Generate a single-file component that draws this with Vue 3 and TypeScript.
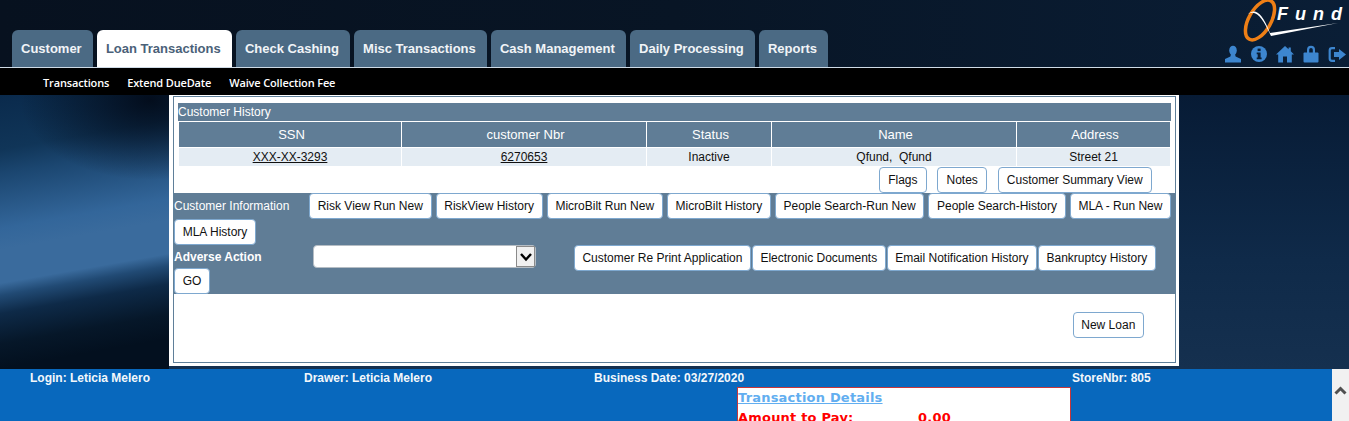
<script setup lang="ts">
const tabs = ['Customer', 'Loan Transactions', 'Check Cashing', 'Misc Transactions', 'Cash Management', 'Daily Processing', 'Reports']
const subs = ['Transactions', 'Extend DueDate', 'Waive Collection Fee']
const infoButtons = ['Risk View Run New', 'RiskView History', 'MicroBilt Run New', 'MicroBilt History', 'People Search-Run New', 'People Search-History', 'MLA - Run New']
const adverseButtons = ['Customer Re Print Application', 'Electronic Documents', 'Email Notification History', 'Bankruptcy History']
</script>

<template>
  <div class="page">
    <header class="top">
      <nav class="tabs">
        <a v-for="t in tabs" :key="t" class="tab" :class="{ active: t === 'Loan Transactions' }">{{ t }}</a>
      </nav>
      <div class="brand">
        <div class="logo">
          <svg class="logo-art" width="107" height="44" viewBox="0 0 107 44">
            <ellipse cx="18" cy="20" rx="11" ry="22" transform="rotate(30 18 20)" fill="none" stroke="#ee7f16" stroke-width="3.5" />
            <path d="M6 14 C13 8 20 12 28 33 L96 23 L29 36 C21 19 15 9 6 14Z" fill="#fff" />
          </svg>
          <span class="fund">Fund</span>
        </div>
        <div class="icons">
          <svg width="18" height="18" viewBox="0 0 18 18"><ellipse cx="9" cy="5.5" rx="3.8" ry="4.8" fill="#3d86cf"/><path d="M7 9h4l.6 2.6L17 14v3.4H1V14l5.4-2.4z" fill="#3d86cf"/></svg>
          <svg width="18" height="18" viewBox="0 0 18 18"><circle cx="9" cy="9" r="8" fill="#3d86cf"/><rect x="7.6" y="3.6" width="3" height="2.5" fill="#0a1c33"/><path d="M6.7 7.4h3.9v5h1v1.8H6.7v-1.8h1V9.2h-1z" fill="#0a1c33"/></svg>
          <svg width="18" height="18" viewBox="0 0 18 18"><path d="M9 1 L12.6 4.2 V2.4 H14.8 V6.2 L18 9.4 L15.8 9.4 L15.8 17.4 L11 17.4 L11 11.6 L7 11.6 L7 17.4 L2.2 17.4 L2.2 9.4 L0 9.4Z" fill="#3d86cf"/></svg>
          <svg width="18" height="18" viewBox="0 0 18 18"><path d="M5 8V4.8a4 4 0 0 1 8 0V8h-2.2V4.8a1.8 1.8 0 0 0-3.6 0V8z" fill="#3d86cf"/><rect x="1.5" y="7.5" width="15" height="10" rx="1" fill="#3d86cf"/></svg>
          <svg width="18" height="18" viewBox="0 0 18 18"><path d="M7 2H4a3.4 3.4 0 0 0-3.4 3.4v8.2A3.4 3.4 0 0 0 4 17h3v-2.2H4.2a1.4 1.4 0 0 1-1.4-1.4V5.6a1.4 1.4 0 0 1 1.4-1.4H7z" fill="#3d86cf"/><path d="M11 4 L18 9.5 L11 15 V12 H6 V7 H11Z" fill="#3d86cf"/></svg>
        </div>
      </div>
    </header>

    <nav class="subnav">
      <a v-for="s in subs" :key="s">{{ s }}</a>
    </nav>

    <main class="stage">
      <section class="card">
        <div class="frame">
          <div class="title">Customer History</div>
          <div class="grid head">
            <div>SSN</div><div>customer Nbr</div><div>Status</div><div>Name</div><div>Address</div>
          </div>
          <div class="grid row">
            <div><u>XXX-XX-3293</u></div><div><u>6270653</u></div><div>Inactive</div><div>Qfund,&nbsp; Qfund</div><div>Street 21</div>
          </div>
          <div class="flags">
            <button class="btn">Flags</button>
            <button class="btn">Notes</button>
            <button class="btn">Customer Summary View</button>
          </div>
          <div class="panel">
            <div class="line info-line">
              <span class="label">Customer Information</span>
              <button v-for="b in infoButtons" :key="b" class="btn">{{ b }}</button>
            </div>
            <div class="line"><button class="btn">MLA History</button></div>
            <div class="line adverse-line">
              <strong class="label adverse">Adverse Action</strong>
              <div class="select"><span class="arrow"><svg width="14" height="10" viewBox="0 0 14 10"><path d="M2 2 L7 7.5 L12 2" fill="none" stroke="#000" stroke-width="2.4"/></svg></span></div>
              <div class="adverse-buttons">
                <button v-for="b in adverseButtons" :key="b" class="btn">{{ b }}</button>
              </div>
            </div>
            <div class="line go-line"><button class="btn">GO</button></div>
          </div>
          <div class="actions"><button class="btn">New Loan</button></div>
        </div>
      </section>
    </main>

    <footer class="foot">
      <div class="foot-main">
        <div class="status">
          <span class="s1">Login: Leticia Melero</span>
          <span class="s2">Drawer: Leticia Melero</span>
          <span class="s3">Business Date: 03/27/2020</span>
          <span class="s4">StoreNbr: 805</span>
        </div>
        <div class="details">
          <a class="details-title">Transaction Details</a>
          <div class="amount"><span>Amount to Pay:</span><span class="val">0.00</span></div>
        </div>
      </div>
      <div class="scroll">
        <svg width="17" height="17" viewBox="0 0 17 17"><path d="M3.5 11.5 L8.5 6.5 L13.5 11.5" fill="none" stroke="#505050" stroke-width="3"/></svg>
      </div>
    </footer>
  </div>
</template>

<style>
html, body { margin: 0; padding: 0; overflow: hidden; }
</style>

<style scoped>
.page {
  width: 1349px;
  height: 421px;
  overflow: hidden;
  font-family: "Liberation Sans", Arial, sans-serif;
  display: flex;
  flex-direction: column;
}
.top {
  flex: none;
  height: 67px;
  background: linear-gradient(90deg, #07111f 0%, #081525 50%, #0a1e36 100%);
  display: flex;
  justify-content: space-between;
  align-items: flex-end;
  border-bottom: 1px solid #cfdbe6;
}
.tabs { display: flex; gap: 4.2px; padding-left: 12px; }
.tab {
  height: 37px;
  line-height: 37px;
  padding: 0 11px 0 9px;
  box-sizing: border-box;
  border-radius: 6px 6px 0 0;
  background: #4b6a84;
  color: #f1f4f7;
  font-size: 13px;
  font-weight: 700;
}
.tab.active { background: #fff; color: #4a6178; }
.brand { position: relative; width: 120px; height: 67px; }
.logo { position: absolute; left: 13px; top: 0; width: 107px; height: 44px; }
.logo-art { position: absolute; left: 0; top: 0; }
.fund {
  position: absolute;
  left: 35px;
  top: 4px;
  color: #fff;
  font: italic 700 18px "Liberation Sans", sans-serif;
  letter-spacing: 7px;
}
.icons {
  position: absolute;
  right: 3px;
  bottom: 4px;
  display: flex;
  gap: 8px;
}
.subnav {
  flex: none;
  height: 27px;
  box-sizing: border-box;
  padding: 2px 0 0 43px;
  background: #000;
  display: flex;
  align-items: center;
  gap: 18px;
  color: #fff;
  font: 600 11px "Open Sans", sans-serif;
  letter-spacing: -0.15px;
}
.stage {
  flex: none;
  height: 274px;
  background:
    radial-gradient(ellipse 130px 80px at 150px 5px, rgba(2, 10, 24, .92), rgba(2, 10, 24, 0) 100%) no-repeat 0 0 / 169px 100%,
    linear-gradient(170deg,
      #0a2a4c 0%, #103558 18%, #1b4670 26%, #33669a 44%, #3a6b9d 51%, #3a6b9d 62%,
      #214a74 66%, #0e2a48 72%, #061729 82%, #03101f 90%) no-repeat 0 0 / 169px 100%,
    linear-gradient(180deg, #071b35 0%, #0f2a49 60%, #15304f 100%);
}
.card {
  margin-left: 169px;
  width: 1010px;
  height: 271px;
  box-sizing: border-box;
  background: #fff;
  padding: 1px 3px 3px 4px;
}
.frame {
  height: 267px;
  box-sizing: border-box;
  border: 1px solid #5f7f99;
  padding-top: 6px;
  display: flex;
  flex-direction: column;
}
.title {
  flex: none;
  margin: 0 4px;
  height: 18px;
  line-height: 18px;
  background: #607d96;
  color: #fff;
  font-size: 12px;
}
.grid {
  flex: none;
  display: grid;
  grid-template-columns: 222px 245px 125px 245px 154px;
  margin: 1px 5px 0;
  text-align: center;
  font-size: 12px;
}
.grid > div { border-left: 1px solid #fff; box-sizing: border-box; }
.grid > div:first-child { border-left: 0; }
.head { height: 25px; line-height: 25px; background: #607d96; color: #fff; font-size: 13px; }
.head > div { padding-left: 3px; }
.row { height: 18px; line-height: 18px; background: #e4ecf3; color: #111; }
.btn {
  flex: none;
  height: 26px;
  box-sizing: border-box;
  padding: 0 7.7px;
  background: #fff;
  border: 1px solid #7ea8cf;
  border-radius: 4px;
  color: #111;
  font: 12px "Liberation Sans", Arial, sans-serif;
  white-space: nowrap;
}
.flags {
  flex: none;
  height: 26px;
  margin-top: 1px;
  display: flex;
  gap: 10.6px;
  padding-left: 705px;
}
.flags .btn { padding: 0 8.2px; }
.panel { flex: none; background: #607d96; height: 101px; }
.line { display: flex; height: 26px; gap: 4px; }
.label { color: #fff; font-size: 12px; line-height: 26px; width: 131px; flex: none; }
.adverse { font-weight: 700; line-height: 24px; }
.adverse-line { gap: 0; height: 23px; }
.select {
  flex: none;
  width: 223px;
  height: 23px;
  margin-left: 8px;
  box-sizing: border-box;
  background: #fff;
  border: 1px solid #b5bdc4;
  border-radius: 4px;
  display: flex;
  justify-content: flex-end;
}
.arrow {
  width: 19px;
  box-sizing: border-box;
  background: #f0f0f0;
  border: 1px solid #8a8a8a;
  display: flex;
  align-items: center;
  justify-content: center;
}
.adverse-buttons { display: flex; gap: 1.2px; margin-left: 38px; }
.adverse-buttons .btn { padding: 0 7.4px; }
.actions { display: flex; justify-content: flex-end; padding: 18px 31px 0 0; }
.foot {
  flex: none;
  height: 52px;
  display: flex;
  background: #0868bd;
  color: #f3f7fb;
}
.foot-main { flex: 1; }
.status { height: 18px; display: flex; font-size: 12px; font-weight: 700; line-height: 18px; }
.status span { flex: none; }
.s1 { margin-left: 30px; width: 274px; }
.s2 { width: 290px; }
.s3 { width: 478px; }
.details {
  margin-left: 737px;
  width: 334px;
  height: 34px;
  overflow: hidden;
  box-sizing: border-box;
  background: #fff;
  border: 1px solid #c8373a;
  border-bottom: 0;
  font: 700 13px "DejaVu Sans", sans-serif;
  letter-spacing: 0.2px;
}
.details-title { display: block; color: #62aef0; text-decoration: underline; line-height: 19px; }
.amount { color: #f00; display: flex; line-height: 19px; margin-top: 1px; white-space: nowrap; }
.amount span:first-child { width: 180px; flex: none; }
.scroll { width: 17px; background: #f1f1f1; padding-top: 13px; box-sizing: border-box; }
.scroll svg { display: block; }
</style>
